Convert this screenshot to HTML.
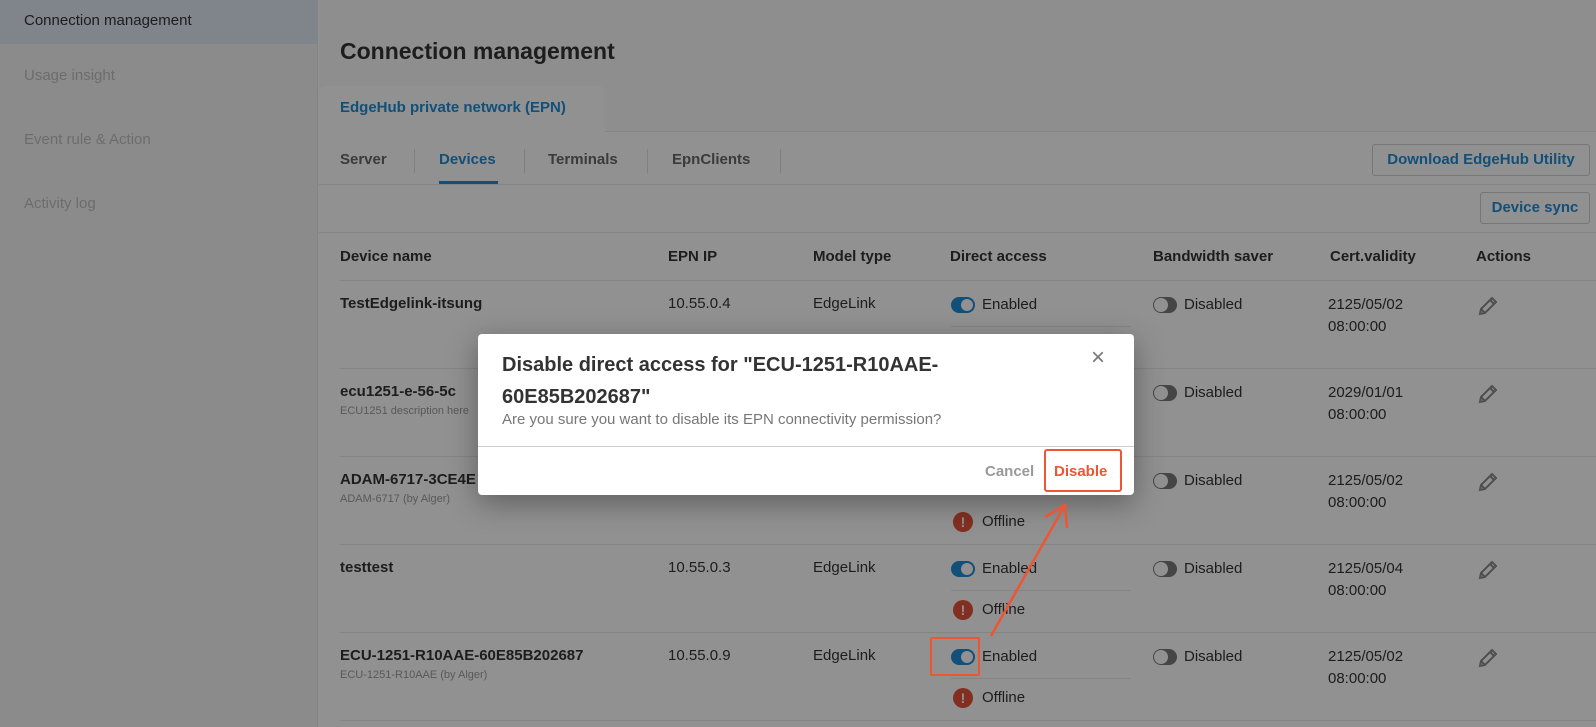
<!DOCTYPE html>
<html style="background:#fafafa"><head><meta charset="utf-8"><style>
*{box-sizing:border-box;margin:0;padding:0}
body{width:1596px;height:727px;overflow:hidden;position:relative;background:#fafafa;font-family:"Liberation Sans",Arial,sans-serif;color:#333}
.abs{position:absolute;white-space:nowrap}
#side{position:absolute;left:0;top:0;width:318px;height:727px;background:#f0f0f0;border-right:1px solid #e4e4e4}
#side .hl{position:absolute;left:0;top:0;width:318px;height:44px;background:#dbe6f0}
.si{position:absolute;left:24px;font-size:15px;color:#bbb}
.top{position:absolute;left:319px;top:0;width:1277px;height:132px;background:#f5f5f5;border-bottom:1px solid #e4e4e4}
.tab{position:absolute;left:319px;top:86px;width:286px;height:47px;background:#fafafa;border-radius:6px 6px 0 0}
.line{position:absolute;left:319px;width:1277px;height:1px;background:#e4e4e4}
.sub{font-size:15px;font-weight:bold;color:#666}
.sep{position:absolute;top:149px;width:1px;height:24px;background:#ddd}
.btn{position:absolute;border:1px solid #ccc;border-radius:3px;color:#1f8ad0;font-weight:bold;font-size:15px;text-align:center;background:#fafafa}
.th{font-size:15px;font-weight:bold;color:#333;top:248px}
.td{font-size:15px;color:#333}
.b{font-weight:bold}
.desc{font-size:11px;color:#999}
.tog{position:absolute;width:24px;height:16px;border-radius:8px}
.tog.on{background:#1f8ad0}
.tog.on::after{content:"";position:absolute;right:2px;top:2px;width:12px;height:12px;border-radius:50%;background:#fafafa}
.tog.off{background:#777}
.tog.off::after{content:"";position:absolute;left:1px;top:1px;width:14px;height:14px;border-radius:50%;background:#fafafa}
.off-ic{position:absolute;width:20px;height:20px;border-radius:50%;background:#e0513a;color:#fafafa;font-weight:bold;font-size:14px;text-align:center;line-height:20px}
.rowl{position:absolute;left:340px;width:1256px;height:1px;background:#e4e4e4}
.il{position:absolute;left:951px;width:180px;height:1px;background:#e4e4e4}
#ov{position:absolute;left:0;top:0;width:1596px;height:727px;background:rgba(0,0,0,0.42)}
</style></head><body>
<div id="side"><div class="hl"></div>
<div class="si" style="top:12px;color:#333">Connection management</div>
<div class="si" style="top:67px">Usage insight</div>
<div class="si" style="top:131px">Event rule &amp; Action</div>
<div class="si" style="top:195px">Activity log</div>
</div>
<div class="top"></div>
<div class="abs" style="left:340px;top:38px;font-size:23px;font-weight:bold;color:#333">Connection management</div>
<div class="tab"></div>
<div class="abs" style="left:340px;top:99px;font-size:15px;font-weight:bold;color:#1f8ad0">EdgeHub private network (EPN)</div>
<div class="abs sub" style="left:340px;top:151px">Server</div>
<div class="sep" style="left:414px"></div>
<div class="abs sub" style="left:439px;top:151px;color:#1f8ad0">Devices</div>
<div style="position:absolute;left:439px;top:181px;width:59px;height:3px;background:#1f8ad0"></div>
<div class="sep" style="left:524px"></div>
<div class="abs sub" style="left:548px;top:151px">Terminals</div>
<div class="sep" style="left:647px"></div>
<div class="abs sub" style="left:672px;top:151px">EpnClients</div>
<div class="sep" style="left:780px"></div>
<div class="line" style="top:184px"></div>
<div class="btn" style="left:1372px;top:144px;width:218px;height:32px;line-height:30px">Download EdgeHub Utility</div>
<div class="btn" style="left:1480px;top:192px;width:110px;height:32px;line-height:30px">Device sync</div>
<div class="line" style="top:232px"></div>
<div class="abs th" style="left:340px">Device name</div>
<div class="abs th" style="left:668px">EPN IP</div>
<div class="abs th" style="left:813px">Model type</div>
<div class="abs th" style="left:950px">Direct access</div>
<div class="abs th" style="left:1153px">Bandwidth saver</div>
<div class="abs th" style="left:1330px">Cert.validity</div>
<div class="abs th" style="left:1476px">Actions</div>

<div class="rowl" style="top:280px"></div>
<div class="rowl" style="top:368px"></div>
<div class="rowl" style="top:456px"></div>
<div class="rowl" style="top:544px"></div>
<div class="rowl" style="top:632px"></div>
<div class="rowl" style="top:720px"></div>

<div class="abs td b" style="left:340px;top:295px">TestEdgelink-itsung</div>
<div class="abs td" style="left:668px;top:295px">10.55.0.4</div>
<div class="abs td" style="left:813px;top:295px">EdgeLink</div>
<div class="tog on" style="left:951px;top:297px"></div><div class="abs td" style="left:982px;top:296px">Enabled</div>
<div class="il" style="top:326px"></div>
<div class="abs td b" style="left:340px;top:383px">ecu1251-e-56-5c</div>
<div class="abs desc" style="left:340px;top:405px">ECU1251 description here</div>
<div class="abs td b" style="left:340px;top:471px">ADAM-6717-3CE4E</div>
<div class="abs desc" style="left:340px;top:493px">ADAM-6717 (by Alger)</div>
<div class="off-ic" style="left:953px;top:512px">!</div><div class="abs td" style="left:982px;top:513px">Offline</div>
<div class="abs td b" style="left:340px;top:559px">testtest</div>
<div class="abs td" style="left:668px;top:559px">10.55.0.3</div>
<div class="abs td" style="left:813px;top:559px">EdgeLink</div>
<div class="tog on" style="left:951px;top:561px"></div><div class="abs td" style="left:982px;top:560px">Enabled</div>
<div class="il" style="top:590px"></div>
<div class="off-ic" style="left:953px;top:600px">!</div><div class="abs td" style="left:982px;top:601px">Offline</div>
<div class="abs td b" style="left:340px;top:647px">ECU-1251-R10AAE-60E85B202687</div>
<div class="abs desc" style="left:340px;top:669px">ECU-1251-R10AAE (by Alger)</div>
<div class="abs td" style="left:668px;top:647px">10.55.0.9</div>
<div class="abs td" style="left:813px;top:647px">EdgeLink</div>
<div class="tog on" style="left:951px;top:649px"></div><div class="abs td" style="left:982px;top:648px">Enabled</div>
<div class="il" style="top:678px"></div>
<div class="off-ic" style="left:953px;top:688px">!</div><div class="abs td" style="left:982px;top:689px">Offline</div>

<div class="tog off" style="left:1153px;top:297px"></div><div class="abs td" style="left:1184px;top:296px">Disabled</div>
<div class="abs td" style="left:1328px;top:294px;line-height:22px">2125/05/02<br>08:00:00</div>
<div class="tog off" style="left:1153px;top:385px"></div><div class="abs td" style="left:1184px;top:384px">Disabled</div>
<div class="abs td" style="left:1328px;top:382px;line-height:22px">2029/01/01<br>08:00:00</div>
<div class="tog off" style="left:1153px;top:473px"></div><div class="abs td" style="left:1184px;top:472px">Disabled</div>
<div class="abs td" style="left:1328px;top:470px;line-height:22px">2125/05/02<br>08:00:00</div>
<div class="tog off" style="left:1153px;top:561px"></div><div class="abs td" style="left:1184px;top:560px">Disabled</div>
<div class="abs td" style="left:1328px;top:558px;line-height:22px">2125/05/04<br>08:00:00</div>
<div class="tog off" style="left:1153px;top:649px"></div><div class="abs td" style="left:1184px;top:648px">Disabled</div>
<div class="abs td" style="left:1328px;top:646px;line-height:22px">2125/05/02<br>08:00:00</div>

<svg class="abs" style="left:1477px;top:295px" width="22" height="22" viewBox="0 0 22 22"><g fill="none" stroke="#888" stroke-width="2"><path d="M3 19 L4 14 L15 3 L19 7 L8 18 Z M13 5 L17 9 M4 14 L8 18"/></g></svg>
<svg class="abs" style="left:1477px;top:383px" width="22" height="22" viewBox="0 0 22 22"><g fill="none" stroke="#888" stroke-width="2"><path d="M3 19 L4 14 L15 3 L19 7 L8 18 Z M13 5 L17 9 M4 14 L8 18"/></g></svg>
<svg class="abs" style="left:1477px;top:471px" width="22" height="22" viewBox="0 0 22 22"><g fill="none" stroke="#888" stroke-width="2"><path d="M3 19 L4 14 L15 3 L19 7 L8 18 Z M13 5 L17 9 M4 14 L8 18"/></g></svg>
<svg class="abs" style="left:1477px;top:559px" width="22" height="22" viewBox="0 0 22 22"><g fill="none" stroke="#888" stroke-width="2"><path d="M3 19 L4 14 L15 3 L19 7 L8 18 Z M13 5 L17 9 M4 14 L8 18"/></g></svg>
<svg class="abs" style="left:1477px;top:647px" width="22" height="22" viewBox="0 0 22 22"><g fill="none" stroke="#888" stroke-width="2"><path d="M3 19 L4 14 L15 3 L19 7 L8 18 Z M13 5 L17 9 M4 14 L8 18"/></g></svg>

<div id="ov"></div>

<div style="position:absolute;left:478px;top:334px;width:656px;height:161px;background:#fff;border-radius:4px;box-shadow:0 8px 30px rgba(0,0,0,0.35)">
<div class="abs" style="left:24px;top:15px;font-size:20px;font-weight:bold;color:#333;line-height:32px;white-space:normal;width:560px">Disable direct access for "ECU-1251-R10AAE-<br>60E85B202687"</div>
<div class="abs" style="left:24px;top:77px;font-size:15px;color:#777">Are you sure you want to disable its EPN connectivity permission?</div>
<div class="abs" style="left:613px;top:10px;font-size:24px;color:#777">×</div>
<div style="position:absolute;left:0;top:112px;width:656px;height:1px;background:#ccc"></div>
<div class="abs" style="left:507px;top:129px;font-size:15px;font-weight:bold;color:#999">Cancel</div>
<div style="position:absolute;left:566px;top:115px;width:78px;height:43px;border:2px solid #ee5533;border-radius:3px"></div>
<div class="abs" style="left:576px;top:129px;font-size:15px;font-weight:bold;color:#ee5533">Disable</div>
</div>

<div style="position:absolute;left:930px;top:637px;width:50px;height:39px;border:2px solid #ee5533;border-radius:2px"></div>
<svg class="abs" style="left:0;top:0" width="1596" height="727"><g stroke="#ee5533" stroke-width="2.5" fill="none"><path d="M991 636 L1065 505"/><path d="M1045 517 L1065 505 L1067 528"/></g></svg>
</body></html>
